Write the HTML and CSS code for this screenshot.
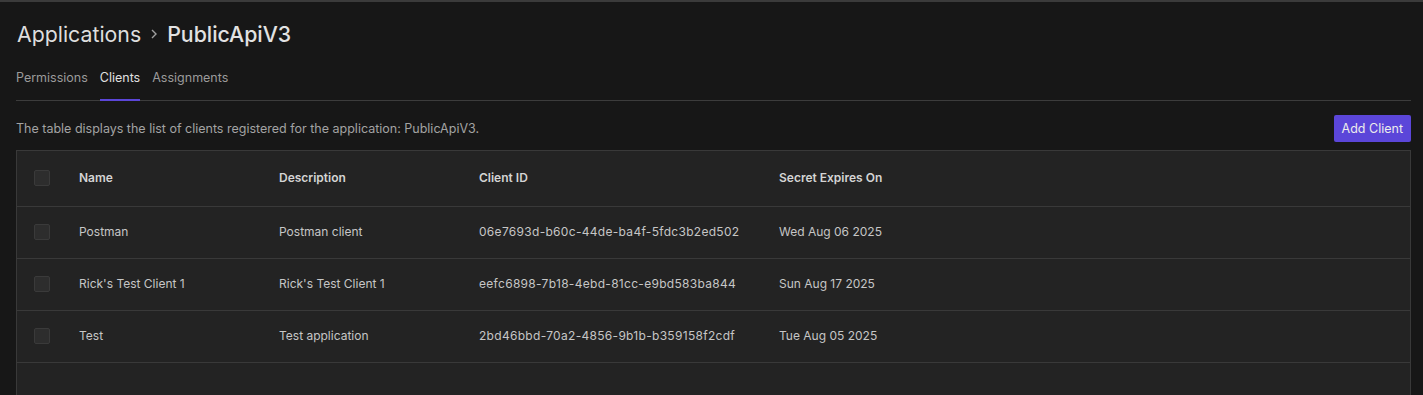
FILE: index.html
```html
<!DOCTYPE html>
<html lang="en">
<head>
  <meta charset="UTF-8" />
  <meta name="viewport" content="width=device-width, initial-scale=1.0"/>
  <title>Clients | PublicApiV3</title>
  <link rel="stylesheet" href="styles.css">
</head>
<body>
  <main class="page">
    <h1 class="breadcrumb">
      <span class="crumb">Applications</span>
      <svg class="crumb-sep" width="8" height="12" viewBox="0 0 8 12"><path d="M2 2l4 4-4 4" fill="none" stroke="#a0a0a0" stroke-width="1.4"/></svg>
      <span class="crumb-current">PublicApiV3</span>
    </h1>

    <nav class="tabs">
      <a class="tab">Permissions</a>
      <a class="tab active">Clients</a>
      <a class="tab">Assignments</a>
    </nav>

    <div class="toolbar">
      <p class="table-note">The table displays the list of clients registered for the application: PublicApiV3.</p>
      <button class="add-btn">Add Client</button>
    </div>

    <div class="clients-table">
      <div class="row head">
        <div class="cell check"><span class="checkbox"></span></div>
        <div class="cell">Name</div>
        <div class="cell">Description</div>
        <div class="cell">Client ID</div>
        <div class="cell">Secret Expires On</div>
      </div>
      <div class="row">
        <div class="cell check"><span class="checkbox"></span></div>
        <div class="cell">Postman</div>
        <div class="cell">Postman client</div>
        <div class="cell client-id">06e7693d-b60c-44de-ba4f-5fdc3b2ed502</div>
        <div class="cell">Wed Aug 06 2025</div>
      </div>
      <div class="row">
        <div class="cell check"><span class="checkbox"></span></div>
        <div class="cell">Rick's Test Client 1</div>
        <div class="cell">Rick's Test Client 1</div>
        <div class="cell client-id">eefc6898-7b18-4ebd-81cc-e9bd583ba844</div>
        <div class="cell">Sun Aug 17 2025</div>
      </div>
      <div class="row">
        <div class="cell check"><span class="checkbox"></span></div>
        <div class="cell">Test</div>
        <div class="cell">Test application</div>
        <div class="cell client-id">2bd46bbd-70a2-4856-9b1b-b359158f2cdf</div>
        <div class="cell">Tue Aug 05 2025</div>
      </div>
      <div class="table-fill"></div>
    </div>
  </main>
</body>
</html>
```

FILE: styles.css
```css
html, body {
  margin: 0;
  height: 100%;
}

body {
  font-family: 'Inter', 'Noto Sans', sans-serif;
  background: #171717;
  color: #d2d2d2;
  border-top: 2px solid #3b3b3b;
  box-sizing: border-box;
  overflow: hidden;
}

.page {
  padding: 16px 12px 0 16px;
}

.breadcrumb {
  display: flex;
  align-items: center;
  gap: 9px;
  margin: 0 0 0 1px;
  font-size: 21.3px;
  line-height: 32px;
  font-weight: 400;
  color: #dedede;
}

.crumb-current {
  font-weight: 500;
  color: #e2e2e2;
}

.tabs {
  display: flex;
  gap: 12px;
  margin-top: 13px;
  border-bottom: 1px solid #3c3c3c;
}

.tab {
  font-size: 12.5px;
  line-height: 20px;
  padding: 5px 0 12px;
  color: #9b9b9b;
  cursor: pointer;
}

.tab.active {
  color: #e0e0e0;
  border-bottom: 2px solid #5b46d8;
  margin-bottom: -1px;
  padding-bottom: 11px;
}

.toolbar {
  display: flex;
  align-items: center;
  justify-content: space-between;
  margin-top: 14px;
}

.table-note {
  margin: 0;
  font-size: 12.5px;
  color: #a3a3a3;
}

.add-btn {
  background: #5b46d9;
  color: #ececec;
  font-family: inherit;
  font-size: 12.5px;
  height: 27px;
  padding: 0 8px;
  border: none;
  border-radius: 2px;
  cursor: pointer;
}

.clients-table {
  margin-top: 8px;
  background: #232323;
  border: 1px solid #393939;
  border-bottom: none;
}

.row {
  display: grid;
  grid-template-columns: 62px 200px 200px 300px 1fr;
  align-items: center;
  height: 52px;
  padding-bottom: 2px;
  box-sizing: border-box;
  border-bottom: 1px solid #393939;
  font-size: 12px;
  color: #c6c6c6;
}

.row.head {
  height: 56px;
  font-weight: 600;
  color: #d4d4d4;
}

.client-id {
  letter-spacing: 0.3px;
}

.cell.check {
  padding-left: 17px;
  display: flex;
}

.checkbox {
  width: 14px;
  height: 14px;
  background: #2d2d2d;
  border: 1px solid #3a3a3a;
  border-radius: 2px;
}

.table-fill {
  height: 60px;
}
```
